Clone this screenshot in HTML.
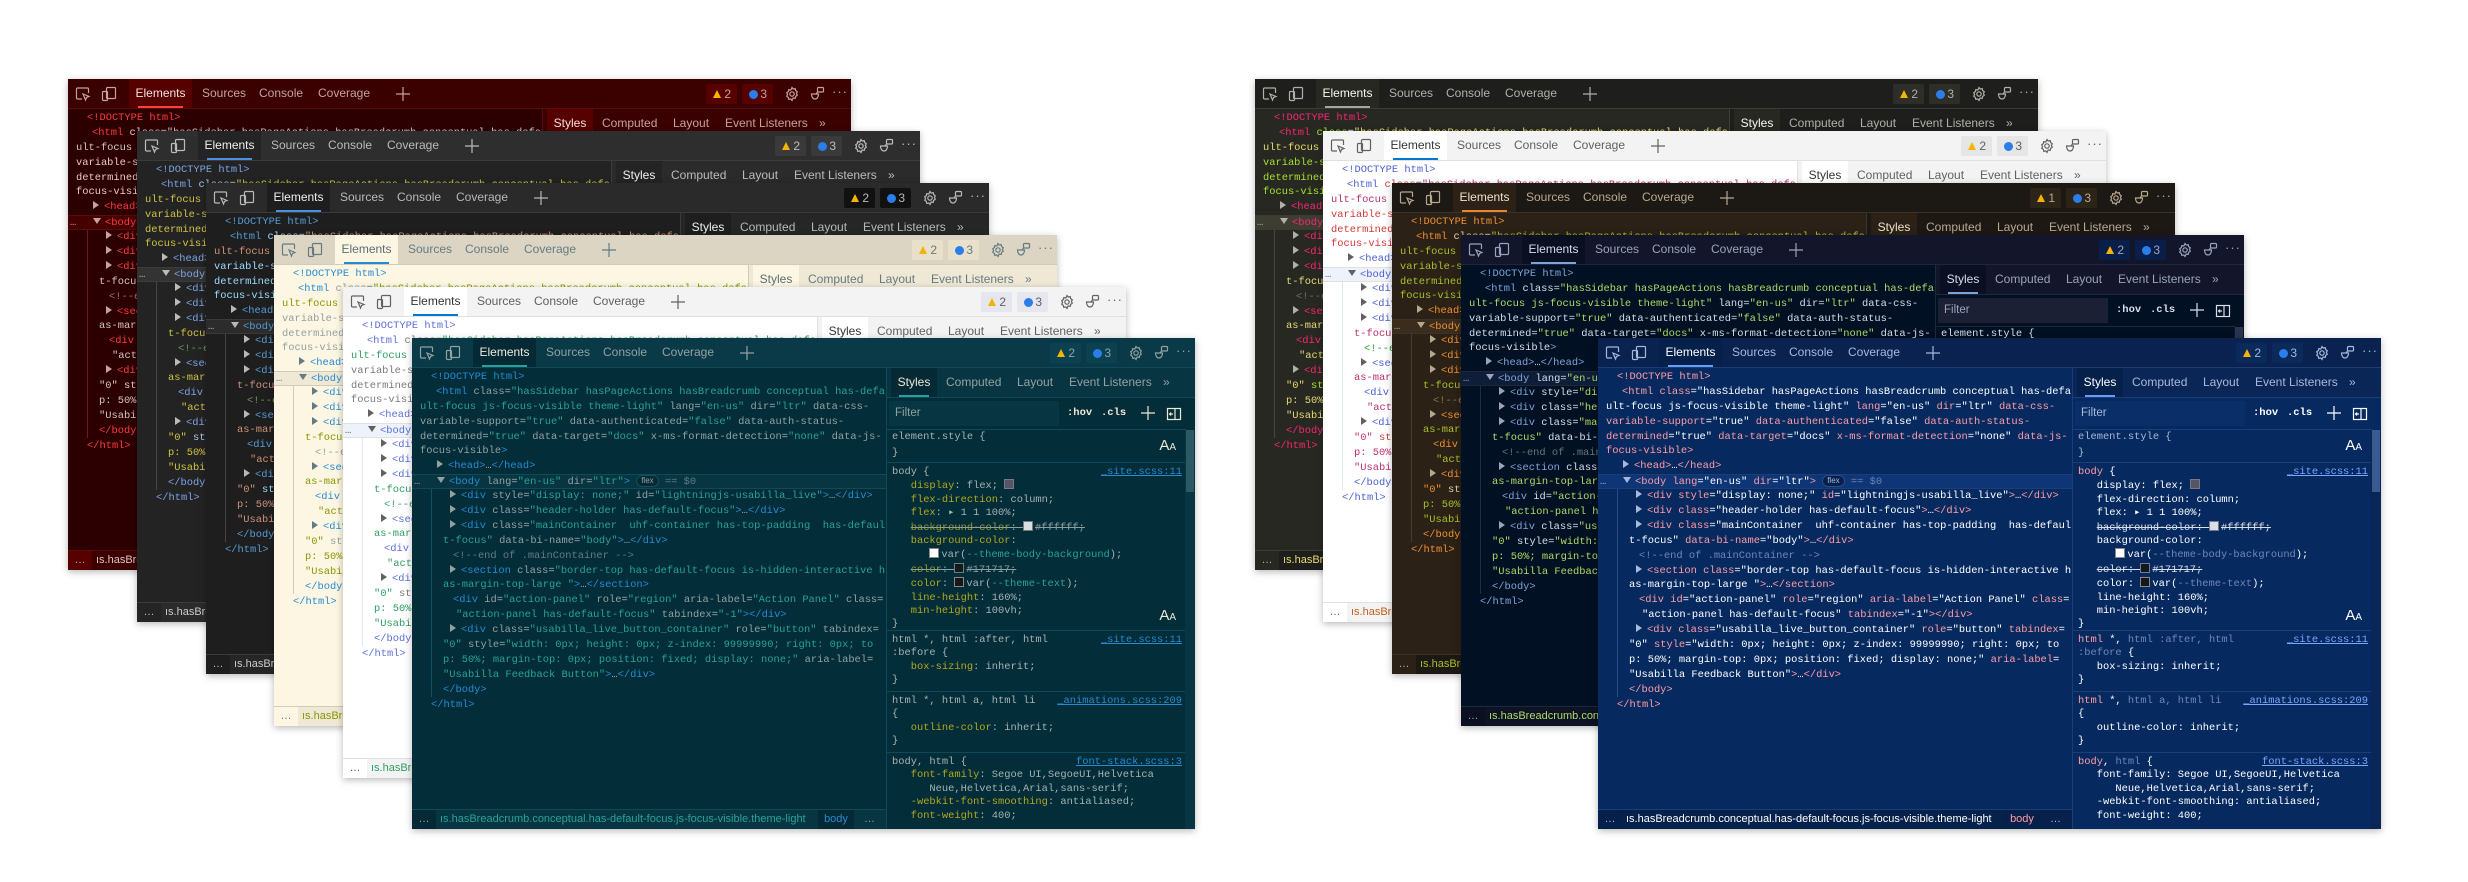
<!DOCTYPE html>
<html><head><meta charset="utf-8">
<style>
body{margin:0;width:2468px;height:882px;background:#fff;position:relative;overflow:hidden;font-family:"Liberation Sans",sans-serif}
.w{position:absolute;width:783px;height:491px;overflow:hidden;box-shadow:0 2px 7px rgba(0,0,0,.28);background:var(--bg)}
.tb{position:absolute;left:0;top:0;width:783px;height:29px;background:var(--tb);border-bottom:1px solid var(--bd);color:var(--tx);font-size:12px}
.tab{position:absolute;top:0;height:29px;line-height:29px}
.tsel{left:61px;width:63px;text-align:center;background:var(--ts);color:var(--txs)}
.tsel:after{content:"";position:absolute;left:9px;right:9px;bottom:0;height:2px;background:var(--ul)}
.ic{position:absolute;top:7px;width:16px;height:16px;fill:none;stroke:currentColor;stroke-width:1.2}
.b1,.b2{position:absolute;top:5px;width:31px;height:20px;background:var(--bdg);line-height:20px;font-size:12px;text-align:right;padding-right:6px;box-sizing:border-box;color:var(--tx);border-radius:2px}
.b1{left:638px}.b2{left:674px}
.wa{position:absolute;left:7px;top:6px;width:0;height:0;border-left:4.5px solid transparent;border-right:4.5px solid transparent;border-bottom:8px solid #f5b400}
.inf{position:absolute;left:7px;top:6px;width:9px;height:9px;border-radius:50%;background:#2b7de9}
.dots{position:absolute;left:764px;top:0;line-height:26px;font-size:13px;letter-spacing:1px}
.el{position:absolute;left:0;top:30px;width:474px;height:461px;background:var(--bg);font:10.4px/14.9px "Liberation Mono",monospace;color:var(--p);overflow:hidden}
.lines{position:absolute;top:2px;left:0;width:474px}
.ln{height:14.9px;position:relative;white-space:pre;overflow:hidden}
.t{color:var(--t)}.a{color:var(--a)}.v{color:var(--v)}.c{color:var(--c)}
.i19{padding-left:19px}.i24{padding-left:24px}.i8{padding-left:8px}.i25{padding-left:25px}.i38{padding-left:38px}.i31{padding-left:31px}.i41{padding-left:41px}.i44{padding-left:44px}
.tri{display:inline-block;width:0;height:0;border-left:6px solid var(--tx);border-top:4px solid transparent;border-bottom:4px solid transparent;margin-right:5px;vertical-align:0}
.trd{display:inline-block;width:0;height:0;border-top:6px solid var(--tx);border-left:4px solid transparent;border-right:4px solid transparent;margin-right:4px;vertical-align:1px}
.selr{background:var(--sel);border-top:1px solid var(--bd);border-bottom:1px solid var(--bd);box-sizing:border-box}
.el3{position:absolute;left:2px;top:0;color:var(--tx)}
.guide{position:absolute;left:19px;top:121px;width:1px;height:208px;background:var(--gd)}
.flex{display:inline-block;font:8px/10px "Liberation Sans",sans-serif;border:1px solid var(--gd);border-radius:6px;padding:0 4px;color:var(--tx);background:var(--ts);vertical-align:1px}
.sd{position:absolute;left:474px;top:30px;width:309px;height:461px;background:var(--sb);border-left:1px solid var(--bd);box-sizing:border-box}
.sh{position:absolute;left:0;top:0;width:309px;height:30px;background:var(--sh);font-size:12px;color:var(--tx);border-bottom:1px solid var(--bd);box-sizing:border-box}
.sh span{position:absolute;top:0;line-height:29px}
.sh .s1{left:4px;width:46px;text-align:center;background:var(--ts);color:var(--txs)}
.sh .s1:after{content:"";position:absolute;left:8px;right:8px;bottom:0;height:2px;background:var(--ul)}
.flt{position:absolute;top:30px;left:0;width:299px;height:32px;border-bottom:1px solid var(--bd);box-sizing:border-box}
.in{position:absolute;left:2px;top:3px;width:170px;height:25px;background:var(--fi);color:var(--tx);font-size:11.5px;line-height:25px;padding-left:6px;box-sizing:border-box}
.hv{position:absolute;top:0;line-height:31px;font:bold 10.5px/31px "Liberation Mono",monospace;color:var(--txs)}
.rl{position:absolute;left:0;width:299px;font:10.4px/13.4px "Liberation Mono",monospace;color:var(--p);white-space:pre;padding-left:5px;border-bottom:1px solid var(--bd);box-sizing:border-box}
.pr{color:var(--pr)}
.lk{position:absolute;right:4px;color:var(--lk);text-decoration:underline}
.st{text-decoration:line-through;opacity:.85}
.sw{display:inline-block;width:8px;height:8px;border:1px solid #888;vertical-align:-1px;margin-right:2px}
.scr{position:absolute;right:0;top:62px;width:10px;height:399px;background:var(--scb)}
.scr:before{content:"";position:absolute;left:1px;top:0;width:8px;height:62px;background:var(--sct)}
.aa{position:absolute;right:10px;font:15px/15px "Liberation Sans",sans-serif;color:var(--txs)}
.bcb{position:absolute;left:0;top:471px;width:474px;height:20px;background:var(--bc);font-size:11px;line-height:19px;color:var(--bt);white-space:nowrap;overflow:hidden;border-top:1px solid var(--bd);box-sizing:border-box}
.bc0{position:absolute;left:0;top:0;width:24px;height:19px;text-align:center;background:var(--ts);color:var(--tx)}
.bct{position:absolute;left:28px;top:0;width:372px;overflow:hidden}
.bcy{position:absolute;left:406px;top:0;width:36px;text-align:center;background:var(--ts);color:var(--t)}
.bcz{position:absolute;left:452px;top:0;color:var(--tx)}

.th-red{--tb:#3b0000;--ts:#560000;--tx:#c8a0a0;--txs:#f5e0e0;--bg:#2c0000;--sb:#2c0000;--sh:#3b0000;--fi:#3b0000;--bd:#5a0a0a;--ul:#ff4040;--t:#ff3b3b;--a:#e8c8c8;--v:#d4c6c6;--p:#ecdcdc;--c:#b07070;--pr:#ff5a5a;--sel:#450000;--gd:#6a1a1a;--bc:#3b0000;--bt:#e0c0c0;--bdg:#560000;--lk:#ff8080;--scb:#2c0000;--sct:#5a1a1a}
.th-d2{--tb:#2e2e2e;--ts:#242424;--tx:#bbbbbb;--txs:#f0f0f0;--bg:#232323;--sb:#232323;--sh:#2b2b2b;--fi:#333;--bd:#3c3c3c;--ul:#4a90e2;--t:#7ca4e8;--a:#a9c7ef;--v:#cfc443;--p:#d4d4d4;--c:#6a9955;--pr:#9cdcfe;--sel:#333;--gd:#454545;--bc:#2b2b2b;--bt:#ccc;--bdg:#3a3a3a;--lk:#7ca4e8;--scb:#232323;--sct:#444}
.th-d3{--tb:#2a2a2a;--ts:#1e1e1e;--tx:#b8b8b8;--txs:#f0f0f0;--bg:#1e1e1e;--sb:#1e1e1e;--sh:#262626;--fi:#2c2c2c;--bd:#3a3a3a;--ul:#4a90e2;--t:#569cd6;--a:#9cdcfe;--v:#ce9178;--p:#d4d4d4;--c:#6a9955;--pr:#9cdcfe;--sel:#2c2c2c;--gd:#444;--bc:#262626;--bt:#ccc;--bdg:#111;--lk:#569cd6;--scb:#1e1e1e;--sct:#444}
.th-sl{--tb:#dcd5c3;--ts:#fdf6e3;--tx:#657b83;--txs:#586e75;--bg:#fdf6e3;--sb:#fdf6e3;--sh:#eee8d5;--fi:#eee8d5;--bd:#d3cbb7;--ul:#268bd2;--t:#268bd2;--a:#93a1a1;--v:#859900;--p:#657b83;--c:#93a1a1;--pr:#b58900;--sel:#eee8d5;--gd:#d3cbb7;--bc:#eee8d5;--bt:#859900;--bdg:#e8e0cb;--lk:#268bd2;--scb:#eee8d5;--sct:#cfc7b3}
.th-lt{--tb:#f3f3f3;--ts:#ffffff;--tx:#616161;--txs:#333;--bg:#fff;--sb:#fff;--sh:#f3f3f3;--fi:#f3f3f3;--bd:#e0e0e0;--ul:#0078d4;--t:#5a6fd6;--a:#7a7a7a;--v:#2e9e63;--p:#444;--c:#2e9e63;--pr:#c0392b;--sel:#eef3fb;--gd:#dde6f5;--bc:#f3f3f3;--bt:#2e9e63;--bdg:#e6e6ee;--lk:#0078d4;--scb:#fff;--sct:#ddd}
.th-sd{--tb:#0a3a48;--ts:#052a35;--tx:#93a1a1;--txs:#eee8d5;--bg:#022d39;--sb:#022d39;--sh:#073642;--fi:#073642;--bd:#0f4a58;--ul:#2aa198;--t:#268bd2;--a:#93a1a1;--v:#2aa198;--p:#a6b3b3;--c:#657b83;--pr:#b3a81d;--sel:#073642;--gd:#13505e;--bc:#073642;--bt:#2aa198;--bdg:#0b4150;--lk:#268bd2;--scb:#073642;--sct:#2c5964}
.th-mk{--tb:#1e1f1c;--ts:#272822;--tx:#b0b0a8;--txs:#f8f8f2;--bg:#272822;--sb:#272822;--sh:#1e1f1c;--fi:#33342d;--bd:#3b3c35;--ul:#a6a6a0;--t:#f92672;--a:#a6e22e;--v:#e6db74;--p:#f8f8f2;--c:#75715e;--pr:#66d9ef;--sel:#3e3d32;--gd:#49483e;--bc:#1e1f1c;--bt:#e6db74;--bdg:#2d2e28;--lk:#66d9ef;--scb:#272822;--sct:#49483e}
.th-l2{--tb:#f3f3f3;--ts:#ffffff;--tx:#616161;--txs:#333;--bg:#fff;--sb:#fff;--sh:#f3f3f3;--fi:#f3f3f3;--bd:#e0e0e0;--ul:#0078d4;--t:#4a5fcf;--a:#d03838;--v:#b8306e;--p:#444;--c:#2a9a2a;--pr:#c0392b;--sel:#eef3fb;--gd:#dde6f5;--bc:#f3f3f3;--bt:#c06020;--bdg:#e6e6e6;--lk:#0078d4;--scb:#fff;--sct:#ddd}
.th-br{--tb:#1c1813;--ts:#2b2116;--tx:#b8a890;--txs:#f0e0c8;--bg:#2b2116;--sb:#2b2116;--sh:#1c1813;--fi:#352a1d;--bd:#3d3224;--ul:#e8862a;--t:#f09030;--a:#e6d2a8;--v:#a8c02a;--p:#e8dcc8;--c:#8a7a5a;--pr:#f09030;--sel:#3a2d1e;--gd:#4a3c2a;--bc:#1c1813;--bt:#a8c02a;--bdg:#2c2418;--lk:#f09030;--scb:#2b2116;--sct:#4a3c2a}
.th-no{--tb:#13162a;--ts:#0b0f22;--tx:#9aa3bb;--txs:#d6deeb;--bg:#011022;--sb:#011022;--sh:#13162a;--fi:#1b2035;--bd:#1f2740;--ul:#7fa3d8;--t:#7fa3d8;--a:#d6deeb;--v:#addb67;--p:#d6deeb;--c:#637777;--pr:#c5e478;--sel:#0e1e38;--gd:#1f2a44;--bc:#0d1325;--bt:#addb67;--bdg:#0a1e4a;--lk:#82aaff;--scb:#13162a;--sct:#2a3350}
.th-bl{--tb:#0a2250;--ts:#05204a;--tx:#a8b8d8;--txs:#ffffff;--bg:#062a60;--sb:#062a60;--sh:#0a2656;--fi:#0a2f68;--bd:#1b3d78;--ul:#6a9cff;--t:#ff9da4;--a:#ff9da4;--v:#ffffff;--p:#ffffff;--c:#7285b7;--pr:#ffffff;--sel:#0e3575;--gd:#2a4a88;--bc:#05214c;--bt:#ffffff;--bdg:#0a2a5c;--lk:#7aa6ff;--scb:#0a2656;--sct:#3a5a90}
</style></head><body>

<!-- ===== LEFT GROUP ===== -->
<div class="w th-red" style="left:68px;top:79px">
<div class="tb"><svg class="ic" style="left:7px" viewBox="0 0 16 16"><path d="M7 13H2.5a1 1 0 0 1-1-1V3a1 1 0 0 1 1-1h10a1 1 0 0 1 1 1v4"/><path d="M8 8l6 2.5-2.5 1-1 2.5z"/></svg><svg class="ic" style="left:33px" viewBox="0 0 16 16"><rect x="5.5" y="1.5" width="9" height="11" rx="1"/><rect x="1.5" y="5.5" width="5" height="9" rx="1"/></svg><span class="tab tsel">Elements</span><span class="tab" style="left:134px">Sources</span><span class="tab" style="left:191px">Console</span><span class="tab" style="left:250px">Coverage</span><svg class="ic" style="left:327px" viewBox="0 0 16 16"><path d="M8 1v14M1 8h14"/></svg><span class="b1"><i class="wa"></i>2</span><span class="b2"><i class="inf"></i>3</span><svg class="ic" style="left:716px" viewBox="0 0 16 16"><circle cx="8" cy="8" r="2.2"/><path d="M8 1.5l1.2 1.6 2-.5.5 2 1.6 1.2-.9 1.7.9 1.7-1.6 1.2-.5 2-2-.5L8 14.5l-1.2-1.6-2 .5-.5-2-1.6-1.2.9-1.7-.9-1.7 1.6-1.2.5-2 2 .5z"/></svg><svg class="ic" style="left:741px" viewBox="0 0 16 16"><rect x="8.5" y="1.5" width="6" height="4.5" rx="1"/><path d="M2.5 8h7c0 3-1.5 5-3.5 5s-3.5-2-3.5-5zM8.5 6L7 8"/></svg><span class="dots">···</span></div>
<div class="el"><div class="lines">
<div class="ln i19"><span class="t">&lt;!DOCTYPE html&gt;</span></div>
<div class="ln i24"><span class="t">&lt;html</span> <span class="a">class</span>=<span class="v">"hasSidebar hasPageActions hasBreadcrumb conceptual has-defa</span></div>
<div class="ln i8"><span class="v">ult-focus js-focus-visible</span></div>
<div class="ln i8"><span class="a">variable-support</span>=<span class="v">"true"</span></div>
<div class="ln i8"><span class="a">determined</span>=<span class="v">"true"</span></div>
<div class="ln i8"><span class="a">focus-visible</span><span class="t">&gt;</span></div>
<div class="ln i25"><i class="tri"></i><span class="t">&lt;head&gt;</span>…<span class="t">&lt;/head&gt;</span></div>
<div class="ln selr i25"><span class="el3">…</span><i class="trd"></i><span class="t">&lt;body</span> <span class="a">lang</span>=<span class="v">"en-us"</span></div>
<div class="ln i38"><i class="tri"></i><span class="t">&lt;div</span> <span class="a">style</span>=<span class="v">"display</span></div>
<div class="ln i38"><i class="tri"></i><span class="t">&lt;div</span> <span class="a">class</span>=<span class="v">"header</span></div>
<div class="ln i38"><i class="tri"></i><span class="t">&lt;div</span> <span class="a">class</span>=<span class="v">"mainCo</span></div>
<div class="ln i31"><span class="v">t-focus"</span> <span class="a">data-bi</span></div>
<div class="ln i41"><span class="c">&lt;!--end of .main</span></div>
<div class="ln i38"><i class="tri"></i><span class="t">&lt;section</span> <span class="a">class</span></div>
<div class="ln i31"><span class="v">as-margin-top-lar</span></div>
<div class="ln i41"><span class="t">&lt;div</span> <span class="a">id</span>=<span class="v">"action-</span></div>
<div class="ln i44"><span class="v">"action-panel ha</span></div>
<div class="ln i38"><i class="tri"></i><span class="t">&lt;div</span> <span class="a">class</span>=<span class="v">"usa</span></div>
<div class="ln i31"><span class="v">"0"</span> <span class="a">style</span>=<span class="v">"width:</span></div>
<div class="ln i31"><span class="v">p: 50%; margin-to</span></div>
<div class="ln i31"><span class="v">"Usabilla Feedbac</span></div>
<div class="ln i31"><span class="t">&lt;/body&gt;</span></div>
<div class="ln i19"><span class="t">&lt;/html&gt;</span></div>
</div><div class="guide"></div></div>
<div class="sd"><div class="sh"><span class="s1">Styles</span><span style="left:59px">Computed</span><span style="left:130px">Layout</span><span style="left:182px">Event Listeners</span><span style="left:276px">»</span></div></div>
<div class="bcb"><span class="bc0">…</span><span class="bct">ıs.hasBreadcrumb.conceptual.has-default-focus.js-focus-visible.theme-light</span><span class="bcy">body</span><span class="bcz">…</span></div>
</div>

<div class="w th-d2" style="left:137px;top:131px">
<div class="tb"><svg class="ic" style="left:7px" viewBox="0 0 16 16"><path d="M7 13H2.5a1 1 0 0 1-1-1V3a1 1 0 0 1 1-1h10a1 1 0 0 1 1 1v4"/><path d="M8 8l6 2.5-2.5 1-1 2.5z"/></svg><svg class="ic" style="left:33px" viewBox="0 0 16 16"><rect x="5.5" y="1.5" width="9" height="11" rx="1"/><rect x="1.5" y="5.5" width="5" height="9" rx="1"/></svg><span class="tab tsel">Elements</span><span class="tab" style="left:134px">Sources</span><span class="tab" style="left:191px">Console</span><span class="tab" style="left:250px">Coverage</span><svg class="ic" style="left:327px" viewBox="0 0 16 16"><path d="M8 1v14M1 8h14"/></svg><span class="b1"><i class="wa"></i>2</span><span class="b2"><i class="inf"></i>3</span><svg class="ic" style="left:716px" viewBox="0 0 16 16"><circle cx="8" cy="8" r="2.2"/><path d="M8 1.5l1.2 1.6 2-.5.5 2 1.6 1.2-.9 1.7.9 1.7-1.6 1.2-.5 2-2-.5L8 14.5l-1.2-1.6-2 .5-.5-2-1.6-1.2.9-1.7-.9-1.7 1.6-1.2.5-2 2 .5z"/></svg><svg class="ic" style="left:741px" viewBox="0 0 16 16"><rect x="8.5" y="1.5" width="6" height="4.5" rx="1"/><path d="M2.5 8h7c0 3-1.5 5-3.5 5s-3.5-2-3.5-5zM8.5 6L7 8"/></svg><span class="dots">···</span></div>
<div class="el"><div class="lines">
<div class="ln i19"><span class="t">&lt;!DOCTYPE html&gt;</span></div>
<div class="ln i24"><span class="t">&lt;html</span> <span class="a">class</span>=<span class="v">"hasSidebar hasPageActions hasBreadcrumb conceptual has-defa</span></div>
<div class="ln i8"><span class="v">ult-focus js-focus-visible</span></div>
<div class="ln i8"><span class="v">variable-support="true"</span></div>
<div class="ln i8"><span class="v">determined="true"</span></div>
<div class="ln i8"><span class="v">focus-visible</span><span class="t">&gt;</span></div>
<div class="ln i25"><i class="tri"></i><span class="t">&lt;head&gt;</span>…<span class="t">&lt;/head&gt;</span></div>
<div class="ln selr i25"><span class="el3">…</span><i class="trd"></i><span class="t">&lt;body</span> <span class="a">lang</span>=<span class="v">"en-us"</span></div>
<div class="ln i38"><i class="tri"></i><span class="t">&lt;div</span> <span class="a">style</span>=<span class="v">"display</span></div>
<div class="ln i38"><i class="tri"></i><span class="t">&lt;div</span> <span class="a">class</span>=<span class="v">"header</span></div>
<div class="ln i38"><i class="tri"></i><span class="t">&lt;div</span> <span class="a">class</span>=<span class="v">"mainCo</span></div>
<div class="ln i31"><span class="v">t-focus"</span> <span class="a">data-bi</span></div>
<div class="ln i41"><span class="c">&lt;!--end of .main</span></div>
<div class="ln i38"><i class="tri"></i><span class="t">&lt;section</span> <span class="a">class</span></div>
<div class="ln i31"><span class="v">as-margin-top-lar</span></div>
<div class="ln i41"><span class="t">&lt;div</span> <span class="a">id</span>=<span class="v">"action-</span></div>
<div class="ln i44"><span class="v">"action-panel ha</span></div>
<div class="ln i38"><i class="tri"></i><span class="t">&lt;div</span> <span class="a">class</span>=<span class="v">"usa</span></div>
<div class="ln i31"><span class="v">"0"</span> <span class="a">style</span>=<span class="v">"width:</span></div>
<div class="ln i31"><span class="v">p: 50%; margin-to</span></div>
<div class="ln i31"><span class="v">"Usabilla Feedbac</span></div>
<div class="ln i31"><span class="t">&lt;/body&gt;</span></div>
<div class="ln i19"><span class="t">&lt;/html&gt;</span></div>
</div><div class="guide"></div></div>
<div class="sd"><div class="sh"><span class="s1">Styles</span><span style="left:59px">Computed</span><span style="left:130px">Layout</span><span style="left:182px">Event Listeners</span><span style="left:276px">»</span></div></div>
<div class="bcb"><span class="bc0">…</span><span class="bct">ıs.hasBreadcrumb.conceptual.has-default-focus.js-focus-visible.theme-light</span><span class="bcy">body</span><span class="bcz">…</span></div>
</div>

<div class="w th-d3" style="left:206px;top:183px">
<div class="tb"><svg class="ic" style="left:7px" viewBox="0 0 16 16"><path d="M7 13H2.5a1 1 0 0 1-1-1V3a1 1 0 0 1 1-1h10a1 1 0 0 1 1 1v4"/><path d="M8 8l6 2.5-2.5 1-1 2.5z"/></svg><svg class="ic" style="left:33px" viewBox="0 0 16 16"><rect x="5.5" y="1.5" width="9" height="11" rx="1"/><rect x="1.5" y="5.5" width="5" height="9" rx="1"/></svg><span class="tab tsel">Elements</span><span class="tab" style="left:134px">Sources</span><span class="tab" style="left:191px">Console</span><span class="tab" style="left:250px">Coverage</span><svg class="ic" style="left:327px" viewBox="0 0 16 16"><path d="M8 1v14M1 8h14"/></svg><span class="b1"><i class="wa"></i>2</span><span class="b2"><i class="inf"></i>3</span><svg class="ic" style="left:716px" viewBox="0 0 16 16"><circle cx="8" cy="8" r="2.2"/><path d="M8 1.5l1.2 1.6 2-.5.5 2 1.6 1.2-.9 1.7.9 1.7-1.6 1.2-.5 2-2-.5L8 14.5l-1.2-1.6-2 .5-.5-2-1.6-1.2.9-1.7-.9-1.7 1.6-1.2.5-2 2 .5z"/></svg><svg class="ic" style="left:741px" viewBox="0 0 16 16"><rect x="8.5" y="1.5" width="6" height="4.5" rx="1"/><path d="M2.5 8h7c0 3-1.5 5-3.5 5s-3.5-2-3.5-5zM8.5 6L7 8"/></svg><span class="dots">···</span></div>
<div class="el"><div class="lines">
<div class="ln i19"><span class="t">&lt;!DOCTYPE html&gt;</span></div>
<div class="ln i24"><span class="t">&lt;html</span> <span class="a">class</span>=<span class="v">"hasSidebar hasPageActions hasBreadcrumb conceptual has-defa</span></div>
<div class="ln i8"><span class="v">ult-focus js-focus-visible</span></div>
<div class="ln i8"><span class="a">variable-support</span>=<span class="v">"true"</span></div>
<div class="ln i8"><span class="a">determined</span>=<span class="v">"true"</span></div>
<div class="ln i8"><span class="a">focus-visible</span><span class="t">&gt;</span></div>
<div class="ln i25"><i class="tri"></i><span class="t">&lt;head&gt;</span>…<span class="t">&lt;/head&gt;</span></div>
<div class="ln selr i25"><span class="el3">…</span><i class="trd"></i><span class="t">&lt;body</span> <span class="a">lang</span>=<span class="v">"en-us"</span></div>
<div class="ln i38"><i class="tri"></i><span class="t">&lt;div</span> <span class="a">style</span>=<span class="v">"display</span></div>
<div class="ln i38"><i class="tri"></i><span class="t">&lt;div</span> <span class="a">class</span>=<span class="v">"header</span></div>
<div class="ln i38"><i class="tri"></i><span class="t">&lt;div</span> <span class="a">class</span>=<span class="v">"mainCo</span></div>
<div class="ln i31"><span class="v">t-focus"</span> <span class="a">data-bi</span></div>
<div class="ln i41"><span class="c">&lt;!--end of .main</span></div>
<div class="ln i38"><i class="tri"></i><span class="t">&lt;section</span> <span class="a">class</span></div>
<div class="ln i31"><span class="v">as-margin-top-lar</span></div>
<div class="ln i41"><span class="t">&lt;div</span> <span class="a">id</span>=<span class="v">"action-</span></div>
<div class="ln i44"><span class="v">"action-panel ha</span></div>
<div class="ln i38"><i class="tri"></i><span class="t">&lt;div</span> <span class="a">class</span>=<span class="v">"usa</span></div>
<div class="ln i31"><span class="v">"0"</span> <span class="a">style</span>=<span class="v">"width:</span></div>
<div class="ln i31"><span class="v">p: 50%; margin-to</span></div>
<div class="ln i31"><span class="v">"Usabilla Feedbac</span></div>
<div class="ln i31"><span class="t">&lt;/body&gt;</span></div>
<div class="ln i19"><span class="t">&lt;/html&gt;</span></div>
</div><div class="guide"></div></div>
<div class="sd"><div class="sh"><span class="s1">Styles</span><span style="left:59px">Computed</span><span style="left:130px">Layout</span><span style="left:182px">Event Listeners</span><span style="left:276px">»</span></div></div>
<div class="bcb"><span class="bc0">…</span><span class="bct">ıs.hasBreadcrumb.conceptual.has-default-focus.js-focus-visible.theme-light</span><span class="bcy">body</span><span class="bcz">…</span></div>
</div>

<div class="w th-sl" style="left:274px;top:235px">
<div class="tb"><svg class="ic" style="left:7px" viewBox="0 0 16 16"><path d="M7 13H2.5a1 1 0 0 1-1-1V3a1 1 0 0 1 1-1h10a1 1 0 0 1 1 1v4"/><path d="M8 8l6 2.5-2.5 1-1 2.5z"/></svg><svg class="ic" style="left:33px" viewBox="0 0 16 16"><rect x="5.5" y="1.5" width="9" height="11" rx="1"/><rect x="1.5" y="5.5" width="5" height="9" rx="1"/></svg><span class="tab tsel">Elements</span><span class="tab" style="left:134px">Sources</span><span class="tab" style="left:191px">Console</span><span class="tab" style="left:250px">Coverage</span><svg class="ic" style="left:327px" viewBox="0 0 16 16"><path d="M8 1v14M1 8h14"/></svg><span class="b1"><i class="wa"></i>2</span><span class="b2"><i class="inf"></i>3</span><svg class="ic" style="left:716px" viewBox="0 0 16 16"><circle cx="8" cy="8" r="2.2"/><path d="M8 1.5l1.2 1.6 2-.5.5 2 1.6 1.2-.9 1.7.9 1.7-1.6 1.2-.5 2-2-.5L8 14.5l-1.2-1.6-2 .5-.5-2-1.6-1.2.9-1.7-.9-1.7 1.6-1.2.5-2 2 .5z"/></svg><svg class="ic" style="left:741px" viewBox="0 0 16 16"><rect x="8.5" y="1.5" width="6" height="4.5" rx="1"/><path d="M2.5 8h7c0 3-1.5 5-3.5 5s-3.5-2-3.5-5zM8.5 6L7 8"/></svg><span class="dots">···</span></div>
<div class="el"><div class="lines">
<div class="ln i19"><span class="t">&lt;!DOCTYPE html&gt;</span></div>
<div class="ln i24"><span class="t">&lt;html</span> <span class="a">class</span>=<span class="v">"hasSidebar hasPageActions hasBreadcrumb conceptual has-defa</span></div>
<div class="ln i8"><span class="v">ult-focus js-focus-visible</span></div>
<div class="ln i8"><span class="a">variable-support</span>=<span class="v">"true"</span></div>
<div class="ln i8"><span class="a">determined</span>=<span class="v">"true"</span></div>
<div class="ln i8"><span class="a">focus-visible</span><span class="t">&gt;</span></div>
<div class="ln i25"><i class="tri"></i><span class="t">&lt;head&gt;</span>…<span class="t">&lt;/head&gt;</span></div>
<div class="ln selr i25"><span class="el3">…</span><i class="trd"></i><span class="t">&lt;body</span> <span class="a">lang</span>=<span class="v">"en-us"</span></div>
<div class="ln i38"><i class="tri"></i><span class="t">&lt;div</span> <span class="a">style</span>=<span class="v">"display</span></div>
<div class="ln i38"><i class="tri"></i><span class="t">&lt;div</span> <span class="a">class</span>=<span class="v">"header</span></div>
<div class="ln i38"><i class="tri"></i><span class="t">&lt;div</span> <span class="a">class</span>=<span class="v">"mainCo</span></div>
<div class="ln i31"><span class="v">t-focus"</span> <span class="a">data-bi</span></div>
<div class="ln i41"><span class="c">&lt;!--end of .main</span></div>
<div class="ln i38"><i class="tri"></i><span class="t">&lt;section</span> <span class="a">class</span></div>
<div class="ln i31"><span class="v">as-margin-top-lar</span></div>
<div class="ln i41"><span class="t">&lt;div</span> <span class="a">id</span>=<span class="v">"action-</span></div>
<div class="ln i44"><span class="v">"action-panel ha</span></div>
<div class="ln i38"><i class="tri"></i><span class="t">&lt;div</span> <span class="a">class</span>=<span class="v">"usa</span></div>
<div class="ln i31"><span class="v">"0"</span> <span class="a">style</span>=<span class="v">"width:</span></div>
<div class="ln i31"><span class="v">p: 50%; margin-to</span></div>
<div class="ln i31"><span class="v">"Usabilla Feedbac</span></div>
<div class="ln i31"><span class="t">&lt;/body&gt;</span></div>
<div class="ln i19"><span class="t">&lt;/html&gt;</span></div>
</div><div class="guide"></div></div>
<div class="sd"><div class="sh"><span class="s1">Styles</span><span style="left:59px">Computed</span><span style="left:130px">Layout</span><span style="left:182px">Event Listeners</span><span style="left:276px">»</span></div></div>
<div class="bcb"><span class="bc0">…</span><span class="bct">ıs.hasBreadcrumb.conceptual.has-default-focus.js-focus-visible.theme-light</span><span class="bcy">body</span><span class="bcz">…</span></div>
</div>

<div class="w th-lt" style="left:343px;top:287px">
<div class="tb"><svg class="ic" style="left:7px" viewBox="0 0 16 16"><path d="M7 13H2.5a1 1 0 0 1-1-1V3a1 1 0 0 1 1-1h10a1 1 0 0 1 1 1v4"/><path d="M8 8l6 2.5-2.5 1-1 2.5z"/></svg><svg class="ic" style="left:33px" viewBox="0 0 16 16"><rect x="5.5" y="1.5" width="9" height="11" rx="1"/><rect x="1.5" y="5.5" width="5" height="9" rx="1"/></svg><span class="tab tsel">Elements</span><span class="tab" style="left:134px">Sources</span><span class="tab" style="left:191px">Console</span><span class="tab" style="left:250px">Coverage</span><svg class="ic" style="left:327px" viewBox="0 0 16 16"><path d="M8 1v14M1 8h14"/></svg><span class="b1"><i class="wa"></i>2</span><span class="b2"><i class="inf"></i>3</span><svg class="ic" style="left:716px" viewBox="0 0 16 16"><circle cx="8" cy="8" r="2.2"/><path d="M8 1.5l1.2 1.6 2-.5.5 2 1.6 1.2-.9 1.7.9 1.7-1.6 1.2-.5 2-2-.5L8 14.5l-1.2-1.6-2 .5-.5-2-1.6-1.2.9-1.7-.9-1.7 1.6-1.2.5-2 2 .5z"/></svg><svg class="ic" style="left:741px" viewBox="0 0 16 16"><rect x="8.5" y="1.5" width="6" height="4.5" rx="1"/><path d="M2.5 8h7c0 3-1.5 5-3.5 5s-3.5-2-3.5-5zM8.5 6L7 8"/></svg><span class="dots">···</span></div>
<div class="el"><div class="lines">
<div class="ln i19"><span class="t">&lt;!DOCTYPE html&gt;</span></div>
<div class="ln i24"><span class="t">&lt;html</span> <span class="a">class</span>=<span class="v">"hasSidebar hasPageActions hasBreadcrumb conceptual has-defa</span></div>
<div class="ln i8"><span class="v">ult-focus js-focus-visible</span></div>
<div class="ln i8"><span class="a">variable-support</span>=<span class="v">"true"</span></div>
<div class="ln i8"><span class="a">determined</span>=<span class="v">"true"</span></div>
<div class="ln i8"><span class="a">focus-visible</span><span class="t">&gt;</span></div>
<div class="ln i25"><i class="tri"></i><span class="t">&lt;head&gt;</span>…<span class="t">&lt;/head&gt;</span></div>
<div class="ln selr i25"><span class="el3">…</span><i class="trd"></i><span class="t">&lt;body</span> <span class="a">lang</span>=<span class="v">"en-us"</span></div>
<div class="ln i38"><i class="tri"></i><span class="t">&lt;div</span> <span class="a">style</span>=<span class="v">"display</span></div>
<div class="ln i38"><i class="tri"></i><span class="t">&lt;div</span> <span class="a">class</span>=<span class="v">"header</span></div>
<div class="ln i38"><i class="tri"></i><span class="t">&lt;div</span> <span class="a">class</span>=<span class="v">"mainCo</span></div>
<div class="ln i31"><span class="v">t-focus"</span> <span class="a">data-bi</span></div>
<div class="ln i41"><span class="c">&lt;!--end of .main</span></div>
<div class="ln i38"><i class="tri"></i><span class="t">&lt;section</span> <span class="a">class</span></div>
<div class="ln i31"><span class="v">as-margin-top-lar</span></div>
<div class="ln i41"><span class="t">&lt;div</span> <span class="a">id</span>=<span class="v">"action-</span></div>
<div class="ln i44"><span class="v">"action-panel ha</span></div>
<div class="ln i38"><i class="tri"></i><span class="t">&lt;div</span> <span class="a">class</span>=<span class="v">"usa</span></div>
<div class="ln i31"><span class="v">"0"</span> <span class="a">style</span>=<span class="v">"width:</span></div>
<div class="ln i31"><span class="v">p: 50%; margin-to</span></div>
<div class="ln i31"><span class="v">"Usabilla Feedbac</span></div>
<div class="ln i31"><span class="t">&lt;/body&gt;</span></div>
<div class="ln i19"><span class="t">&lt;/html&gt;</span></div>
</div><div class="guide"></div></div>
<div class="sd"><div class="sh"><span class="s1">Styles</span><span style="left:59px">Computed</span><span style="left:130px">Layout</span><span style="left:182px">Event Listeners</span><span style="left:276px">»</span></div></div>
<div class="bcb"><span class="bc0">…</span><span class="bct">ıs.hasBreadcrumb.conceptual.has-default-focus.js-focus-visible.theme-light</span><span class="bcy">body</span><span class="bcz">…</span></div>
</div>

<div class="w th-sd" style="left:412px;top:338px">
<div class="tb"><svg class="ic" style="left:7px" viewBox="0 0 16 16"><path d="M7 13H2.5a1 1 0 0 1-1-1V3a1 1 0 0 1 1-1h10a1 1 0 0 1 1 1v4"/><path d="M8 8l6 2.5-2.5 1-1 2.5z"/></svg><svg class="ic" style="left:33px" viewBox="0 0 16 16"><rect x="5.5" y="1.5" width="9" height="11" rx="1"/><rect x="1.5" y="5.5" width="5" height="9" rx="1"/></svg><span class="tab tsel">Elements</span><span class="tab" style="left:134px">Sources</span><span class="tab" style="left:191px">Console</span><span class="tab" style="left:250px">Coverage</span><svg class="ic" style="left:327px" viewBox="0 0 16 16"><path d="M8 1v14M1 8h14"/></svg><span class="b1"><i class="wa"></i>2</span><span class="b2"><i class="inf"></i>3</span><svg class="ic" style="left:716px" viewBox="0 0 16 16"><circle cx="8" cy="8" r="2.2"/><path d="M8 1.5l1.2 1.6 2-.5.5 2 1.6 1.2-.9 1.7.9 1.7-1.6 1.2-.5 2-2-.5L8 14.5l-1.2-1.6-2 .5-.5-2-1.6-1.2.9-1.7-.9-1.7 1.6-1.2.5-2 2 .5z"/></svg><svg class="ic" style="left:741px" viewBox="0 0 16 16"><rect x="8.5" y="1.5" width="6" height="4.5" rx="1"/><path d="M2.5 8h7c0 3-1.5 5-3.5 5s-3.5-2-3.5-5zM8.5 6L7 8"/></svg><span class="dots">···</span></div>
<div class="el"><div class="lines">
<div class="ln i19"><span class="t">&lt;!DOCTYPE html&gt;</span></div>
<div class="ln i24"><span class="t">&lt;html</span> <span class="a">class</span>=<span class="v">"hasSidebar hasPageActions hasBreadcrumb conceptual has-defa</span></div>
<div class="ln i8"><span class="v">ult-focus js-focus-visible theme-light"</span> <span class="a">lang</span>=<span class="v">"en-us"</span> <span class="a">dir</span>=<span class="v">"ltr"</span> <span class="a">data-css-</span></div>
<div class="ln i8"><span class="a">variable-support</span>=<span class="v">"true"</span> <span class="a">data-authenticated</span>=<span class="v">"false"</span> <span class="a">data-auth-status-</span></div>
<div class="ln i8"><span class="a">determined</span>=<span class="v">"true"</span> <span class="a">data-target</span>=<span class="v">"docs"</span> <span class="a">x-ms-format-detection</span>=<span class="v">"none"</span> <span class="a">data-js-</span></div>
<div class="ln i8"><span class="a">focus-visible</span><span class="t">&gt;</span></div>
<div class="ln i25"><i class="tri"></i><span class="t">&lt;head&gt;</span>…<span class="t">&lt;/head&gt;</span></div>
<div class="ln selr i25"><span class="el3">…</span><i class="trd"></i><span class="t">&lt;body</span> <span class="a">lang</span>=<span class="v">"en-us"</span> <span class="a">dir</span>=<span class="v">"ltr"</span><span class="t">&gt;</span> <span class="flex">flex</span> <span class="c">== $0</span></div>
<div class="ln i38"><i class="tri"></i><span class="t">&lt;div</span> <span class="a">style</span>=<span class="v">"display: none;"</span> <span class="a">id</span>=<span class="v">"lightningjs-usabilla_live"</span><span class="t">&gt;</span>…<span class="t">&lt;/div&gt;</span></div>
<div class="ln i38"><i class="tri"></i><span class="t">&lt;div</span> <span class="a">class</span>=<span class="v">"header-holder has-default-focus"</span><span class="t">&gt;</span>…<span class="t">&lt;/div&gt;</span></div>
<div class="ln i38"><i class="tri"></i><span class="t">&lt;div</span> <span class="a">class</span>=<span class="v">"mainContainer  uhf-container has-top-padding  has-defaul</span></div>
<div class="ln i31"><span class="v">t-focus"</span> <span class="a">data-bi-name</span>=<span class="v">"body"</span><span class="t">&gt;</span>…<span class="t">&lt;/div&gt;</span></div>
<div class="ln i41"><span class="c">&lt;!--end of .mainContainer --&gt;</span></div>
<div class="ln i38"><i class="tri"></i><span class="t">&lt;section</span> <span class="a">class</span>=<span class="v">"border-top has-default-focus is-hidden-interactive h</span></div>
<div class="ln i31"><span class="v">as-margin-top-large "</span><span class="t">&gt;</span>…<span class="t">&lt;/section&gt;</span></div>
<div class="ln i41"><span class="t">&lt;div</span> <span class="a">id</span>=<span class="v">"action-panel"</span> <span class="a">role</span>=<span class="v">"region"</span> <span class="a">aria-label</span>=<span class="v">"Action Panel"</span> <span class="a">class</span>=</div>
<div class="ln i44"><span class="v">"action-panel has-default-focus"</span> <span class="a">tabindex</span>=<span class="v">"-1"</span><span class="t">&gt;&lt;/div&gt;</span></div>
<div class="ln i38"><i class="tri"></i><span class="t">&lt;div</span> <span class="a">class</span>=<span class="v">"usabilla_live_button_container"</span> <span class="a">role</span>=<span class="v">"button"</span> <span class="a">tabindex</span>=</div>
<div class="ln i31"><span class="v">"0"</span> <span class="a">style</span>=<span class="v">"width: 0px; height: 0px; z-index: 99999990; right: 0px; to</span></div>
<div class="ln i31"><span class="v">p: 50%; margin-top: 0px; position: fixed; display: none;"</span> <span class="a">aria-label</span>=</div>
<div class="ln i31"><span class="v">"Usabilla Feedback Button"</span><span class="t">&gt;</span>…<span class="t">&lt;/div&gt;</span></div>
<div class="ln i31"><span class="t">&lt;/body&gt;</span></div>
<div class="ln i19"><span class="t">&lt;/html&gt;</span></div>
</div><div class="guide"></div></div>
<div class="sd"><div class="sh"><span class="s1">Styles</span><span style="left:59px">Computed</span><span style="left:130px">Layout</span><span style="left:182px">Event Listeners</span><span style="left:276px">»</span></div>
<div class="flt"><div class="in">Filter</div><span class="hv" style="left:180px">:hov</span><span class="hv" style="left:214px">.cls</span><svg class="ic" style="left:253px;top:7px;color:var(--txs)" viewBox="0 0 16 16"><path d="M8 1v14M1 8h14"/></svg><svg class="ic" style="left:279px;top:8px;color:var(--txs)" viewBox="0 0 16 16"><rect x="1.5" y="2.5" width="13" height="11"/><path d="M9 2.5v11M7 8H3.5M5 6.5L3.5 8 5 9.5"/></svg></div>
<div class="rl" style="top:62px;height:33px;line-height:15.5px">element.style {
}<span class="aa" style="top:8px">A<small style="font-size:10px">A</small></span></div>
<div class="rl" style="top:96px;height:167px;padding-top:2px">body {<span class="lk" style="top:2px">_site.scss:11</span>
   <span class="pr">display</span>: flex; <span class="sw" style="background:#556;border-color:#778"></span>
   <span class="pr">flex-direction</span>: column;
   <span class="pr">flex</span>: ▸ 1 1 100%;
   <span class="st"><span class="pr">background-color</span>: <span class="sw" style="background:#fff"></span>#ffffff;</span>
   <span class="pr">background-color</span>:
      <span class="sw" style="background:#fff"></span>var(<span class="v">--theme-body-background</span>);
   <span class="st"><span class="pr">color</span>: <span class="sw" style="background:#171717"></span>#171717;</span>
   <span class="pr">color</span>: <span class="sw" style="background:#171717"></span>var(<span class="v">--theme-text</span>);
   <span class="pr">line-height</span>: 160%;
   <span class="pr">min-height</span>: 100vh;
}<span class="aa" style="top:144px">A<small style="font-size:10px">A</small></span></div>
<div class="rl" style="top:264px;height:60px;padding-top:2px">html *, html :after, html<span class="lk" style="top:2px">_site.scss:11</span>
:before {
   <span class="pr">box-sizing</span>: inherit;
}</div>
<div class="rl" style="top:325px;height:60px;padding-top:2px">html *, html a, html li<span class="lk" style="top:2px">_animations.scss:209</span>
{
   <span class="pr">outline-color</span>: inherit;
}</div>
<div class="rl" style="top:386px;height:80px;padding-top:2px;border:0">body, html {<span class="lk" style="top:2px">font-stack.scss:3</span>
   <span class="pr">font-family</span>: Segoe UI,SegoeUI,Helvetica
      Neue,Helvetica,Arial,sans-serif;
   <span class="pr">-webkit-font-smoothing</span>: antialiased;
   <span class="pr">font-weight</span>: 400;</div>
<div class="scr"></div></div>
<div class="bcb"><span class="bc0">…</span><span class="bct">ıs.hasBreadcrumb.conceptual.has-default-focus.js-focus-visible.theme-light</span><span class="bcy">body</span><span class="bcz">…</span></div>
</div>

<!-- ===== RIGHT GROUP ===== -->
<div class="w th-mk" style="left:1255px;top:79px">
<div class="tb"><svg class="ic" style="left:7px" viewBox="0 0 16 16"><path d="M7 13H2.5a1 1 0 0 1-1-1V3a1 1 0 0 1 1-1h10a1 1 0 0 1 1 1v4"/><path d="M8 8l6 2.5-2.5 1-1 2.5z"/></svg><svg class="ic" style="left:33px" viewBox="0 0 16 16"><rect x="5.5" y="1.5" width="9" height="11" rx="1"/><rect x="1.5" y="5.5" width="5" height="9" rx="1"/></svg><span class="tab tsel">Elements</span><span class="tab" style="left:134px">Sources</span><span class="tab" style="left:191px">Console</span><span class="tab" style="left:250px">Coverage</span><svg class="ic" style="left:327px" viewBox="0 0 16 16"><path d="M8 1v14M1 8h14"/></svg><span class="b1"><i class="wa"></i>2</span><span class="b2"><i class="inf"></i>3</span><svg class="ic" style="left:716px" viewBox="0 0 16 16"><circle cx="8" cy="8" r="2.2"/><path d="M8 1.5l1.2 1.6 2-.5.5 2 1.6 1.2-.9 1.7.9 1.7-1.6 1.2-.5 2-2-.5L8 14.5l-1.2-1.6-2 .5-.5-2-1.6-1.2.9-1.7-.9-1.7 1.6-1.2.5-2 2 .5z"/></svg><svg class="ic" style="left:741px" viewBox="0 0 16 16"><rect x="8.5" y="1.5" width="6" height="4.5" rx="1"/><path d="M2.5 8h7c0 3-1.5 5-3.5 5s-3.5-2-3.5-5zM8.5 6L7 8"/></svg><span class="dots">···</span></div>
<div class="el"><div class="lines">
<div class="ln i19"><span class="t">&lt;!DOCTYPE html&gt;</span></div>
<div class="ln i24"><span class="t">&lt;html</span> <span class="a">class</span>=<span class="v">"hasSidebar hasPageActions hasBreadcrumb conceptual has-defa</span></div>
<div class="ln i8"><span class="v">ult-focus js-focus-visible</span></div>
<div class="ln i8"><span class="a">variable-support</span>=<span class="v">"true"</span></div>
<div class="ln i8"><span class="a">determined</span>=<span class="v">"true"</span></div>
<div class="ln i8"><span class="a">focus-visible</span><span class="t">&gt;</span></div>
<div class="ln i25"><i class="tri"></i><span class="t">&lt;head&gt;</span>…<span class="t">&lt;/head&gt;</span></div>
<div class="ln selr i25"><span class="el3">…</span><i class="trd"></i><span class="t">&lt;body</span> <span class="a">lang</span>=<span class="v">"en-us"</span></div>
<div class="ln i38"><i class="tri"></i><span class="t">&lt;div</span> <span class="a">style</span>=<span class="v">"display</span></div>
<div class="ln i38"><i class="tri"></i><span class="t">&lt;div</span> <span class="a">class</span>=<span class="v">"header</span></div>
<div class="ln i38"><i class="tri"></i><span class="t">&lt;div</span> <span class="a">class</span>=<span class="v">"mainCo</span></div>
<div class="ln i31"><span class="v">t-focus"</span> <span class="a">data-bi</span></div>
<div class="ln i41"><span class="c">&lt;!--end of .main</span></div>
<div class="ln i38"><i class="tri"></i><span class="t">&lt;section</span> <span class="a">class</span></div>
<div class="ln i31"><span class="v">as-margin-top-lar</span></div>
<div class="ln i41"><span class="t">&lt;div</span> <span class="a">id</span>=<span class="v">"action-</span></div>
<div class="ln i44"><span class="v">"action-panel ha</span></div>
<div class="ln i38"><i class="tri"></i><span class="t">&lt;div</span> <span class="a">class</span>=<span class="v">"usa</span></div>
<div class="ln i31"><span class="v">"0"</span> <span class="a">style</span>=<span class="v">"width:</span></div>
<div class="ln i31"><span class="v">p: 50%; margin-to</span></div>
<div class="ln i31"><span class="v">"Usabilla Feedbac</span></div>
<div class="ln i31"><span class="t">&lt;/body&gt;</span></div>
<div class="ln i19"><span class="t">&lt;/html&gt;</span></div>
</div><div class="guide"></div></div>
<div class="sd"><div class="sh"><span class="s1">Styles</span><span style="left:59px">Computed</span><span style="left:130px">Layout</span><span style="left:182px">Event Listeners</span><span style="left:276px">»</span></div></div>
<div class="bcb"><span class="bc0">…</span><span class="bct">ıs.hasBreadcrumb.conceptual.has-default-focus.js-focus-visible.theme-light</span><span class="bcy">body</span><span class="bcz">…</span></div>
</div>

<div class="w th-l2" style="left:1323px;top:131px">
<div class="tb"><svg class="ic" style="left:7px" viewBox="0 0 16 16"><path d="M7 13H2.5a1 1 0 0 1-1-1V3a1 1 0 0 1 1-1h10a1 1 0 0 1 1 1v4"/><path d="M8 8l6 2.5-2.5 1-1 2.5z"/></svg><svg class="ic" style="left:33px" viewBox="0 0 16 16"><rect x="5.5" y="1.5" width="9" height="11" rx="1"/><rect x="1.5" y="5.5" width="5" height="9" rx="1"/></svg><span class="tab tsel">Elements</span><span class="tab" style="left:134px">Sources</span><span class="tab" style="left:191px">Console</span><span class="tab" style="left:250px">Coverage</span><svg class="ic" style="left:327px" viewBox="0 0 16 16"><path d="M8 1v14M1 8h14"/></svg><span class="b1"><i class="wa"></i>2</span><span class="b2"><i class="inf"></i>3</span><svg class="ic" style="left:716px" viewBox="0 0 16 16"><circle cx="8" cy="8" r="2.2"/><path d="M8 1.5l1.2 1.6 2-.5.5 2 1.6 1.2-.9 1.7.9 1.7-1.6 1.2-.5 2-2-.5L8 14.5l-1.2-1.6-2 .5-.5-2-1.6-1.2.9-1.7-.9-1.7 1.6-1.2.5-2 2 .5z"/></svg><svg class="ic" style="left:741px" viewBox="0 0 16 16"><rect x="8.5" y="1.5" width="6" height="4.5" rx="1"/><path d="M2.5 8h7c0 3-1.5 5-3.5 5s-3.5-2-3.5-5zM8.5 6L7 8"/></svg><span class="dots">···</span></div>
<div class="el"><div class="lines">
<div class="ln i19"><span class="t">&lt;!DOCTYPE html&gt;</span></div>
<div class="ln i24"><span class="t">&lt;html</span> <span class="a">class</span>=<span class="v">"hasSidebar hasPageActions hasBreadcrumb conceptual has-defa</span></div>
<div class="ln i8"><span class="v">ult-focus js-focus-visible</span></div>
<div class="ln i8"><span class="a">variable-support</span>=<span class="v">"true"</span></div>
<div class="ln i8"><span class="a">determined</span>=<span class="v">"true"</span></div>
<div class="ln i8"><span class="a">focus-visible</span><span class="t">&gt;</span></div>
<div class="ln i25"><i class="tri"></i><span class="t">&lt;head&gt;</span>…<span class="t">&lt;/head&gt;</span></div>
<div class="ln selr i25"><span class="el3">…</span><i class="trd"></i><span class="t">&lt;body</span> <span class="a">lang</span>=<span class="v">"en-us"</span></div>
<div class="ln i38"><i class="tri"></i><span class="t">&lt;div</span> <span class="a">style</span>=<span class="v">"display</span></div>
<div class="ln i38"><i class="tri"></i><span class="t">&lt;div</span> <span class="a">class</span>=<span class="v">"header</span></div>
<div class="ln i38"><i class="tri"></i><span class="t">&lt;div</span> <span class="a">class</span>=<span class="v">"mainCo</span></div>
<div class="ln i31"><span class="v">t-focus"</span> <span class="a">data-bi</span></div>
<div class="ln i41"><span class="c">&lt;!--end of .main</span></div>
<div class="ln i38"><i class="tri"></i><span class="t">&lt;section</span> <span class="a">class</span></div>
<div class="ln i31"><span class="v">as-margin-top-lar</span></div>
<div class="ln i41"><span class="t">&lt;div</span> <span class="a">id</span>=<span class="v">"action-</span></div>
<div class="ln i44"><span class="v">"action-panel ha</span></div>
<div class="ln i38"><i class="tri"></i><span class="t">&lt;div</span> <span class="a">class</span>=<span class="v">"usa</span></div>
<div class="ln i31"><span class="v">"0"</span> <span class="a">style</span>=<span class="v">"width:</span></div>
<div class="ln i31"><span class="v">p: 50%; margin-to</span></div>
<div class="ln i31"><span class="v">"Usabilla Feedbac</span></div>
<div class="ln i31"><span class="t">&lt;/body&gt;</span></div>
<div class="ln i19"><span class="t">&lt;/html&gt;</span></div>
</div><div class="guide"></div></div>
<div class="sd"><div class="sh"><span class="s1">Styles</span><span style="left:59px">Computed</span><span style="left:130px">Layout</span><span style="left:182px">Event Listeners</span><span style="left:276px">»</span></div></div>
<div class="bcb"><span class="bc0">…</span><span class="bct">ıs.hasBreadcrumb.conceptual.has-default-focus.js-focus-visible.theme-light</span><span class="bcy">body</span><span class="bcz">…</span></div>
</div>

<div class="w th-br" style="left:1392px;top:183px">
<div class="tb"><svg class="ic" style="left:7px" viewBox="0 0 16 16"><path d="M7 13H2.5a1 1 0 0 1-1-1V3a1 1 0 0 1 1-1h10a1 1 0 0 1 1 1v4"/><path d="M8 8l6 2.5-2.5 1-1 2.5z"/></svg><svg class="ic" style="left:33px" viewBox="0 0 16 16"><rect x="5.5" y="1.5" width="9" height="11" rx="1"/><rect x="1.5" y="5.5" width="5" height="9" rx="1"/></svg><span class="tab tsel">Elements</span><span class="tab" style="left:134px">Sources</span><span class="tab" style="left:191px">Console</span><span class="tab" style="left:250px">Coverage</span><svg class="ic" style="left:327px" viewBox="0 0 16 16"><path d="M8 1v14M1 8h14"/></svg><span class="b1"><i class="wa"></i>1</span><span class="b2"><i class="inf"></i>3</span><svg class="ic" style="left:716px" viewBox="0 0 16 16"><circle cx="8" cy="8" r="2.2"/><path d="M8 1.5l1.2 1.6 2-.5.5 2 1.6 1.2-.9 1.7.9 1.7-1.6 1.2-.5 2-2-.5L8 14.5l-1.2-1.6-2 .5-.5-2-1.6-1.2.9-1.7-.9-1.7 1.6-1.2.5-2 2 .5z"/></svg><svg class="ic" style="left:741px" viewBox="0 0 16 16"><rect x="8.5" y="1.5" width="6" height="4.5" rx="1"/><path d="M2.5 8h7c0 3-1.5 5-3.5 5s-3.5-2-3.5-5zM8.5 6L7 8"/></svg><span class="dots">···</span></div>
<div class="el"><div class="lines">
<div class="ln i19"><span class="t">&lt;!DOCTYPE html&gt;</span></div>
<div class="ln i24"><span class="t">&lt;html</span> <span class="a">class</span>=<span class="v">"hasSidebar hasPageActions hasBreadcrumb conceptual has-defa</span></div>
<div class="ln i8"><span class="v">ult-focus js-focus-visible</span></div>
<div class="ln i8"><span class="v">variable-support="true"</span></div>
<div class="ln i8"><span class="v">determined="true"</span></div>
<div class="ln i8"><span class="v">focus-visible</span><span class="t">&gt;</span></div>
<div class="ln i25"><i class="tri"></i><span class="t">&lt;head&gt;</span>…<span class="t">&lt;/head&gt;</span></div>
<div class="ln selr i25"><span class="el3">…</span><i class="trd"></i><span class="t">&lt;body</span> <span class="a">lang</span>=<span class="v">"en-us"</span></div>
<div class="ln i38"><i class="tri"></i><span class="t">&lt;div</span> <span class="a">style</span>=<span class="v">"display</span></div>
<div class="ln i38"><i class="tri"></i><span class="t">&lt;div</span> <span class="a">class</span>=<span class="v">"header</span></div>
<div class="ln i38"><i class="tri"></i><span class="t">&lt;div</span> <span class="a">class</span>=<span class="v">"mainCo</span></div>
<div class="ln i31"><span class="v">t-focus"</span> <span class="a">data-bi</span></div>
<div class="ln i41"><span class="c">&lt;!--end of .main</span></div>
<div class="ln i38"><i class="tri"></i><span class="t">&lt;section</span> <span class="a">class</span></div>
<div class="ln i31"><span class="v">as-margin-top-lar</span></div>
<div class="ln i41"><span class="t">&lt;div</span> <span class="a">id</span>=<span class="v">"action-</span></div>
<div class="ln i44"><span class="v">"action-panel ha</span></div>
<div class="ln i38"><i class="tri"></i><span class="t">&lt;div</span> <span class="a">class</span>=<span class="v">"usa</span></div>
<div class="ln i31"><span class="t">"0"</span> <span class="a">style</span>=<span class="v">"width:</span></div>
<div class="ln i31"><span class="v">p: 50%; margin-to</span></div>
<div class="ln i31"><span class="v">"Usabilla Feedbac</span></div>
<div class="ln i31"><span class="t">&lt;/body&gt;</span></div>
<div class="ln i19"><span class="t">&lt;/html&gt;</span></div>
</div><div class="guide"></div></div>
<div class="sd"><div class="sh"><span class="s1">Styles</span><span style="left:59px">Computed</span><span style="left:130px">Layout</span><span style="left:182px">Event Listeners</span><span style="left:276px">»</span></div></div>
<div class="bcb"><span class="bc0">…</span><span class="bct">ıs.hasBreadcrumb.conceptual.has-default-focus.js-focus-visible.theme-light</span><span class="bcy">body</span><span class="bcz">…</span></div>
</div>

<div class="w th-no" style="left:1461px;top:235px">
<div class="tb"><svg class="ic" style="left:7px" viewBox="0 0 16 16"><path d="M7 13H2.5a1 1 0 0 1-1-1V3a1 1 0 0 1 1-1h10a1 1 0 0 1 1 1v4"/><path d="M8 8l6 2.5-2.5 1-1 2.5z"/></svg><svg class="ic" style="left:33px" viewBox="0 0 16 16"><rect x="5.5" y="1.5" width="9" height="11" rx="1"/><rect x="1.5" y="5.5" width="5" height="9" rx="1"/></svg><span class="tab tsel">Elements</span><span class="tab" style="left:134px">Sources</span><span class="tab" style="left:191px">Console</span><span class="tab" style="left:250px">Coverage</span><svg class="ic" style="left:327px" viewBox="0 0 16 16"><path d="M8 1v14M1 8h14"/></svg><span class="b1"><i class="wa"></i>2</span><span class="b2"><i class="inf"></i>3</span><svg class="ic" style="left:716px" viewBox="0 0 16 16"><circle cx="8" cy="8" r="2.2"/><path d="M8 1.5l1.2 1.6 2-.5.5 2 1.6 1.2-.9 1.7.9 1.7-1.6 1.2-.5 2-2-.5L8 14.5l-1.2-1.6-2 .5-.5-2-1.6-1.2.9-1.7-.9-1.7 1.6-1.2.5-2 2 .5z"/></svg><svg class="ic" style="left:741px" viewBox="0 0 16 16"><rect x="8.5" y="1.5" width="6" height="4.5" rx="1"/><path d="M2.5 8h7c0 3-1.5 5-3.5 5s-3.5-2-3.5-5zM8.5 6L7 8"/></svg><span class="dots">···</span></div>
<div class="el"><div class="lines">
<div class="ln i19"><span class="t">&lt;!DOCTYPE html&gt;</span></div>
<div class="ln i24"><span class="t">&lt;html</span> <span class="a">class</span>=<span class="v">"hasSidebar hasPageActions hasBreadcrumb conceptual has-defa</span></div>
<div class="ln i8"><span class="v">ult-focus js-focus-visible theme-light"</span> <span class="a">lang</span>=<span class="v">"en-us"</span> <span class="a">dir</span>=<span class="v">"ltr"</span> <span class="a">data-css-</span></div>
<div class="ln i8"><span class="a">variable-support</span>=<span class="v">"true"</span> <span class="a">data-authenticated</span>=<span class="v">"false"</span> <span class="a">data-auth-status-</span></div>
<div class="ln i8"><span class="a">determined</span>=<span class="v">"true"</span> <span class="a">data-target</span>=<span class="v">"docs"</span> <span class="a">x-ms-format-detection</span>=<span class="v">"none"</span> <span class="a">data-js-</span></div>
<div class="ln i8"><span class="a">focus-visible</span><span class="t">&gt;</span></div>
<div class="ln i25"><i class="tri"></i><span class="t">&lt;head&gt;</span>…<span class="t">&lt;/head&gt;</span></div>
<div class="ln selr i25"><span class="el3">…</span><i class="trd"></i><span class="t">&lt;body</span> <span class="a">lang</span>=<span class="v">"en-us"</span> <span class="a">dir</span>=<span class="v">"ltr"</span><span class="t">&gt;</span></div>
<div class="ln i38"><i class="tri"></i><span class="t">&lt;div</span> <span class="a">style</span>=<span class="v">"display: none;"</span></div>
<div class="ln i38"><i class="tri"></i><span class="t">&lt;div</span> <span class="a">class</span>=<span class="v">"header-holder</span></div>
<div class="ln i38"><i class="tri"></i><span class="t">&lt;div</span> <span class="a">class</span>=<span class="v">"mainContainer</span></div>
<div class="ln i31"><span class="v">t-focus"</span> <span class="a">data-bi-name</span></div>
<div class="ln i41"><span class="c">&lt;!--end of .mainContainer</span></div>
<div class="ln i38"><i class="tri"></i><span class="t">&lt;section</span> <span class="a">class</span>=<span class="v">"bord</span></div>
<div class="ln i31"><span class="v">as-margin-top-large "</span></div>
<div class="ln i41"><span class="t">&lt;div</span> <span class="a">id</span>=<span class="v">"action-panel"</span></div>
<div class="ln i44"><span class="v">"action-panel has-defa</span></div>
<div class="ln i38"><i class="tri"></i><span class="t">&lt;div</span> <span class="a">class</span>=<span class="v">"usabilla</span></div>
<div class="ln i31"><span class="v">"0"</span> <span class="a">style</span>=<span class="v">"width: 0px;</span></div>
<div class="ln i31"><span class="v">p: 50%; margin-top: 0</span></div>
<div class="ln i31"><span class="v">"Usabilla Feedback But</span></div>
<div class="ln i31"><span class="t">&lt;/body&gt;</span></div>
<div class="ln i19"><span class="t">&lt;/html&gt;</span></div>
</div><div class="guide"></div></div>
<div class="sd"><div class="sh"><span class="s1">Styles</span><span style="left:59px">Computed</span><span style="left:130px">Layout</span><span style="left:182px">Event Listeners</span><span style="left:276px">»</span></div>
<div class="flt"><div class="in">Filter</div><span class="hv" style="left:180px">:hov</span><span class="hv" style="left:214px">.cls</span><svg class="ic" style="left:253px;top:7px;color:var(--txs)" viewBox="0 0 16 16"><path d="M8 1v14M1 8h14"/></svg><svg class="ic" style="left:279px;top:8px;color:var(--txs)" viewBox="0 0 16 16"><rect x="1.5" y="2.5" width="13" height="11"/><path d="M9 2.5v11M7 8H3.5M5 6.5L3.5 8 5 9.5"/></svg></div>
<div class="rl" style="top:62px;height:33px;line-height:15.5px">element.style {
}</div>
<div class="scr"></div></div>
<div class="bcb"><span class="bc0">…</span><span class="bct">ıs.hasBreadcrumb.conceptual.has-default-focus.js-focus-visible.theme-light</span><span class="bcy">body</span><span class="bcz">…</span></div>
</div>

<div class="w th-bl" style="left:1598px;top:338px">
<div class="tb"><svg class="ic" style="left:7px" viewBox="0 0 16 16"><path d="M7 13H2.5a1 1 0 0 1-1-1V3a1 1 0 0 1 1-1h10a1 1 0 0 1 1 1v4"/><path d="M8 8l6 2.5-2.5 1-1 2.5z"/></svg><svg class="ic" style="left:33px" viewBox="0 0 16 16"><rect x="5.5" y="1.5" width="9" height="11" rx="1"/><rect x="1.5" y="5.5" width="5" height="9" rx="1"/></svg><span class="tab tsel">Elements</span><span class="tab" style="left:134px">Sources</span><span class="tab" style="left:191px">Console</span><span class="tab" style="left:250px">Coverage</span><svg class="ic" style="left:327px" viewBox="0 0 16 16"><path d="M8 1v14M1 8h14"/></svg><span class="b1"><i class="wa"></i>2</span><span class="b2"><i class="inf"></i>3</span><svg class="ic" style="left:716px" viewBox="0 0 16 16"><circle cx="8" cy="8" r="2.2"/><path d="M8 1.5l1.2 1.6 2-.5.5 2 1.6 1.2-.9 1.7.9 1.7-1.6 1.2-.5 2-2-.5L8 14.5l-1.2-1.6-2 .5-.5-2-1.6-1.2.9-1.7-.9-1.7 1.6-1.2.5-2 2 .5z"/></svg><svg class="ic" style="left:741px" viewBox="0 0 16 16"><rect x="8.5" y="1.5" width="6" height="4.5" rx="1"/><path d="M2.5 8h7c0 3-1.5 5-3.5 5s-3.5-2-3.5-5zM8.5 6L7 8"/></svg><span class="dots">···</span></div>
<div class="el"><div class="lines">
<div class="ln i19"><span class="t">&lt;!DOCTYPE html&gt;</span></div>
<div class="ln i24"><span class="t">&lt;html</span> <span class="a">class</span>=<span class="v">"hasSidebar hasPageActions hasBreadcrumb conceptual has-defa</span></div>
<div class="ln i8"><span class="v">ult-focus js-focus-visible theme-light"</span> <span class="a">lang</span>=<span class="v">"en-us"</span> <span class="a">dir</span>=<span class="v">"ltr"</span> <span class="a">data-css-</span></div>
<div class="ln i8"><span class="a">variable-support</span>=<span class="v">"true"</span> <span class="a">data-authenticated</span>=<span class="v">"false"</span> <span class="a">data-auth-status-</span></div>
<div class="ln i8"><span class="a">determined</span>=<span class="v">"true"</span> <span class="a">data-target</span>=<span class="v">"docs"</span> <span class="a">x-ms-format-detection</span>=<span class="v">"none"</span> <span class="a">data-js-</span></div>
<div class="ln i8"><span class="a">focus-visible</span><span class="t">&gt;</span></div>
<div class="ln i25"><i class="tri"></i><span class="t">&lt;head&gt;</span>…<span class="t">&lt;/head&gt;</span></div>
<div class="ln selr i25"><span class="el3">…</span><i class="trd"></i><span class="t">&lt;body</span> <span class="a">lang</span>=<span class="v">"en-us"</span> <span class="a">dir</span>=<span class="v">"ltr"</span><span class="t">&gt;</span> <span class="flex">flex</span> <span class="c">== $0</span></div>
<div class="ln i38"><i class="tri"></i><span class="t">&lt;div</span> <span class="a">style</span>=<span class="v">"display: none;"</span> <span class="a">id</span>=<span class="v">"lightningjs-usabilla_live"</span><span class="t">&gt;</span>…<span class="t">&lt;/div&gt;</span></div>
<div class="ln i38"><i class="tri"></i><span class="t">&lt;div</span> <span class="a">class</span>=<span class="v">"header-holder has-default-focus"</span><span class="t">&gt;</span>…<span class="t">&lt;/div&gt;</span></div>
<div class="ln i38"><i class="tri"></i><span class="t">&lt;div</span> <span class="a">class</span>=<span class="v">"mainContainer  uhf-container has-top-padding  has-defaul</span></div>
<div class="ln i31"><span class="v">t-focus"</span> <span class="a">data-bi-name</span>=<span class="v">"body"</span><span class="t">&gt;</span>…<span class="t">&lt;/div&gt;</span></div>
<div class="ln i41"><span class="c">&lt;!--end of .mainContainer --&gt;</span></div>
<div class="ln i38"><i class="tri"></i><span class="t">&lt;section</span> <span class="a">class</span>=<span class="v">"border-top has-default-focus is-hidden-interactive h</span></div>
<div class="ln i31"><span class="v">as-margin-top-large "</span><span class="t">&gt;</span>…<span class="t">&lt;/section&gt;</span></div>
<div class="ln i41"><span class="t">&lt;div</span> <span class="a">id</span>=<span class="v">"action-panel"</span> <span class="a">role</span>=<span class="v">"region"</span> <span class="a">aria-label</span>=<span class="v">"Action Panel"</span> <span class="a">class</span>=</div>
<div class="ln i44"><span class="v">"action-panel has-default-focus"</span> <span class="a">tabindex</span>=<span class="v">"-1"</span><span class="t">&gt;&lt;/div&gt;</span></div>
<div class="ln i38"><i class="tri"></i><span class="t">&lt;div</span> <span class="a">class</span>=<span class="v">"usabilla_live_button_container"</span> <span class="a">role</span>=<span class="v">"button"</span> <span class="a">tabindex</span>=</div>
<div class="ln i31"><span class="v">"0"</span> <span class="a">style</span>=<span class="v">"width: 0px; height: 0px; z-index: 99999990; right: 0px; to</span></div>
<div class="ln i31"><span class="v">p: 50%; margin-top: 0px; position: fixed; display: none;"</span> <span class="a">aria-label</span>=</div>
<div class="ln i31"><span class="v">"Usabilla Feedback Button"</span><span class="t">&gt;</span>…<span class="t">&lt;/div&gt;</span></div>
<div class="ln i31"><span class="t">&lt;/body&gt;</span></div>
<div class="ln i19"><span class="t">&lt;/html&gt;</span></div>
</div><div class="guide"></div></div>
<div class="sd"><div class="sh"><span class="s1">Styles</span><span style="left:59px">Computed</span><span style="left:130px">Layout</span><span style="left:182px">Event Listeners</span><span style="left:276px">»</span></div>
<div class="flt"><div class="in">Filter</div><span class="hv" style="left:180px">:hov</span><span class="hv" style="left:214px">.cls</span><svg class="ic" style="left:253px;top:7px;color:var(--txs)" viewBox="0 0 16 16"><path d="M8 1v14M1 8h14"/></svg><svg class="ic" style="left:279px;top:8px;color:var(--txs)" viewBox="0 0 16 16"><rect x="1.5" y="2.5" width="13" height="11"/><path d="M9 2.5v11M7 8H3.5M5 6.5L3.5 8 5 9.5"/></svg></div>
<div class="rl" style="top:62px;height:33px;line-height:15.5px;color:#a8b8d8">element.style {
}<span class="aa" style="top:8px">A<small style="font-size:10px">A</small></span></div>
<div class="rl" style="top:96px;height:167px;padding-top:2px"><span class="t">body</span> {<span class="lk" style="top:2px">_site.scss:11</span>
   <span class="pr">display</span>: flex; <span class="sw" style="background:#556;border-color:#778"></span>
   <span class="pr">flex-direction</span>: column;
   <span class="pr">flex</span>: ▸ 1 1 100%;
   <span class="st"><span class="pr">background-color</span>: <span class="sw" style="background:#fff"></span>#ffffff;</span>
   <span class="pr">background-color</span>:
      <span class="sw" style="background:#fff"></span>var(<span class="c">--theme-body-background</span>);
   <span class="st"><span class="pr">color</span>: <span class="sw" style="background:#171717"></span>#171717;</span>
   <span class="pr">color</span>: <span class="sw" style="background:#171717"></span>var(<span class="c">--theme-text</span>);
   <span class="pr">line-height</span>: 160%;
   <span class="pr">min-height</span>: 100vh;
}<span class="aa" style="top:144px">A<small style="font-size:10px">A</small></span></div>
<div class="rl" style="top:264px;height:60px;padding-top:2px"><span class="t">html</span> *, <span class="c">html :after, html</span><span class="lk" style="top:2px">_site.scss:11</span>
<span class="c">:before</span> {
   <span class="pr">box-sizing</span>: inherit;
}</div>
<div class="rl" style="top:325px;height:60px;padding-top:2px"><span class="t">html</span> *, <span class="c">html a, html li</span><span class="lk" style="top:2px">_animations.scss:209</span>
{
   <span class="pr">outline-color</span>: inherit;
}</div>
<div class="rl" style="top:386px;height:80px;padding-top:2px;border:0"><span class="t">body</span>, <span class="c">html</span> {<span class="lk" style="top:2px">font-stack.scss:3</span>
   <span class="pr">font-family</span>: Segoe UI,SegoeUI,Helvetica
      Neue,Helvetica,Arial,sans-serif;
   <span class="pr">-webkit-font-smoothing</span>: antialiased;
   <span class="pr">font-weight</span>: 400;</div>
<div class="scr"></div></div>
<div class="bcb"><span class="bc0">…</span><span class="bct">ıs.hasBreadcrumb.conceptual.has-default-focus.js-focus-visible.theme-light</span><span class="bcy">body</span><span class="bcz">…</span></div>
</div>

</body></html>
